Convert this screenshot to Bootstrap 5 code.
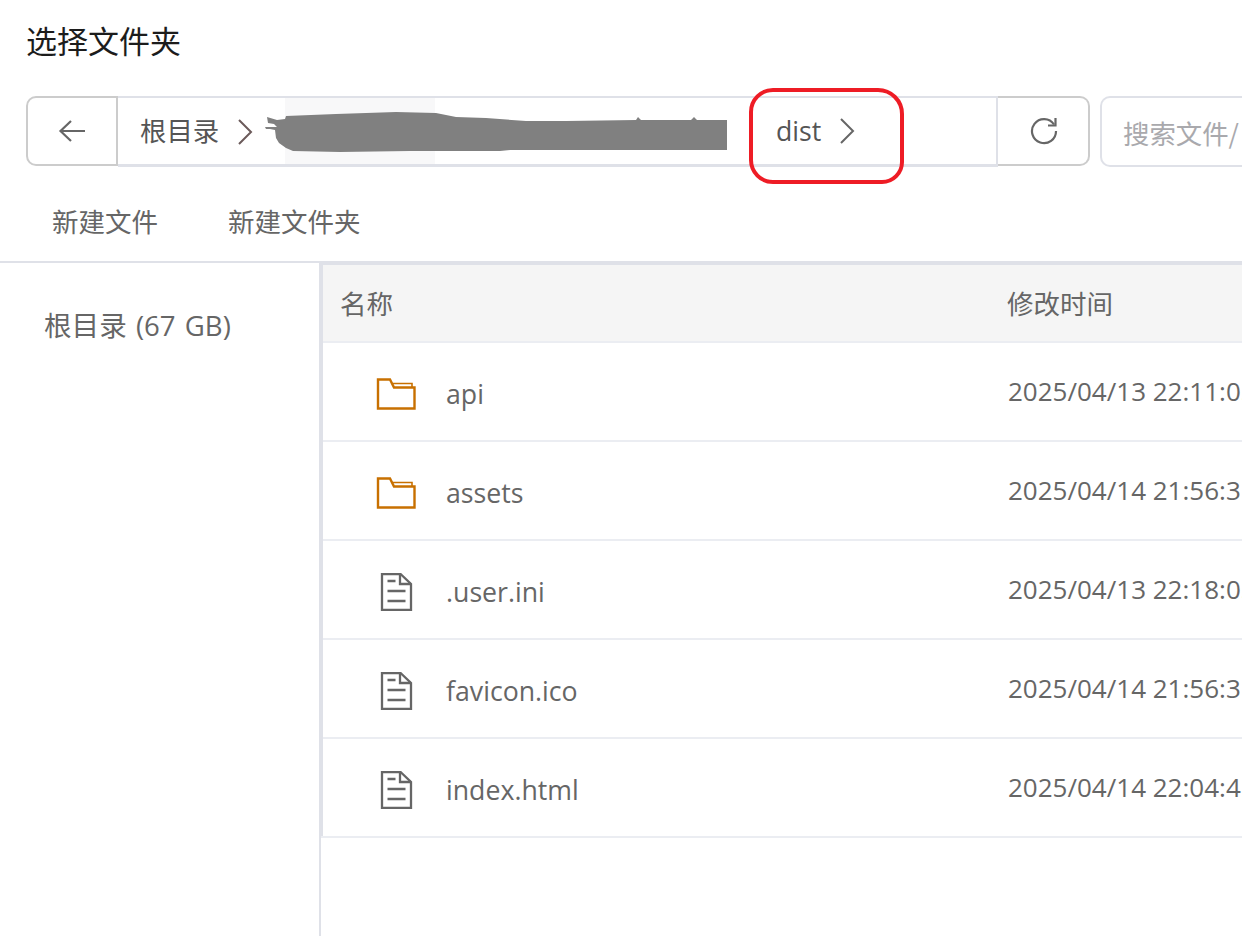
<!DOCTYPE html>
<html lang="zh-CN">
<head>
<meta charset="utf-8">
<title>选择文件夹</title>
<link href="https://cdn.jsdelivr.net/npm/bootstrap@5.3.0/dist/css/bootstrap.min.css" rel="stylesheet">
<style>
html,body{margin:0;height:936px;overflow:hidden;background:#fff}
body{font-family:"Open Sans","Noto Sans CJK SC",sans-serif;color:#666;font-size:26px;line-height:1.2;width:1242px;position:relative}
.dlg-title{height:96px;padding:20px 0 0 26px;font-size:31px;line-height:40px;color:#1c1c1c;font-family:"Noto Sans CJK SC",sans-serif}
.path-row{height:71px;padding-left:26px}
.back-btn,.reload-btn{width:92px;height:70px;border:2px solid #ccc;background:#fff;display:flex;align-items:center;justify-content:center;flex:none}
.back-btn{border-radius:10px 0 0 10px}
.reload-btn{border-radius:0 10px 10px 0;border-left:0;padding-left:2px}
.crumbs{width:880px;height:71px;flex:none;border:solid #dfe1e8;border-width:2px 2px 3px 0;padding-left:22px;position:relative;background:#fff;color:#555;font-size:26.4px}
.crumb-name{white-space:nowrap}
.crumb-dist{position:absolute;left:658px;top:17px;display:flex;align-items:center;gap:18px;line-height:32px;font-size:26.7px}
.crumb-root{gap:18px;position:relative;padding-top:2px}
.fade-box{position:absolute;left:167px;top:0;width:150px;height:66px;background:#f8f8f9}
.search-box{margin-left:10px;flex:1;height:71px;border:2px solid #dfe1e8;border-right:0;border-radius:10px 0 0 10px;padding:19px 0 0 21px;color:#a9a9ad;white-space:nowrap;overflow:hidden;font-family:"Noto Sans CJK SC",sans-serif;font-size:26.4px}
.tool-row{height:96px;padding-left:26px;border-bottom:2px solid #dfe1e8;gap:70px;align-items:center}
.tool-item{padding-left:26px;font-size:26.5px;font-family:"Noto Sans CJK SC",sans-serif;color:#666;line-height:36px;margin-top:14px;white-space:nowrap}
.tool-item + .tool-item{padding-left:0}
.main-area{height:673px}
.side-pane{width:321px;flex:none;padding:44px 0 0 44px;font-size:27.6px;word-spacing:2px;line-height:36px;color:#666;white-space:nowrap;border-right:2px solid #dfe1e8}
.list-pane{flex:1;position:relative;min-width:0}
.list-pane::before{content:"";position:absolute;left:0;top:0;height:573px;width:2px;background:#dfe1e8}
.head-row{height:80px;background:#f5f5f5;border-top:2px solid #dfe1e8;border-bottom:2px solid #ebedf2;align-items:center;padding-top:4px;font-size:26.5px}
.cell-name{width:687px;flex:none;display:flex;align-items:center}
.cell-time{white-space:nowrap;color:#666;font-size:26px}
.head-row .cell-name{padding-left:19px}
.head-row .cell-time{font-size:26.5px;margin-left:-1px}
.file-row{height:99px;border-bottom:2px solid #ebedf2;align-items:center;overflow:hidden}
.file-row .cell-name{padding-left:55px;padding-top:4px;font-size:26.7px}
.file-row .cell-name span{padding-top:2px;margin-left:-1px}
.ico-box{width:40px;height:38px;flex:none;margin-right:31px;display:flex;align-items:center}
.red-mark{position:absolute;left:749px;top:88px;width:155px;height:96px;border:4px solid #ee1c25;border-radius:24px 26px 22px 24px;pointer-events:none}
.smear{position:absolute;left:260px;top:110px;pointer-events:none}
</style>
</head>
<body>
<div class="dlg-title">选择文件夹</div>

<div class="path-row d-flex">
  <div class="back-btn">
    <svg width="28" height="24" viewBox="0 0 28 24" fill="none" stroke="#666" stroke-width="2.2"><path d="M13 2 2.500 12 13 22M2.500 12H27"/></svg>
  </div>
  <div class="crumbs d-flex align-items-center">
    <div class="fade-box"></div>
    <div class="crumb-root d-flex align-items-center">
      <span class="crumb-name">根目录</span>
      <svg width="16" height="26" viewBox="0 0 16 26" fill="none" stroke="#6b5a5a" stroke-width="2"><path d="M2 1l12 12L2 25"/></svg>
    </div>
    <div class="crumb-dist">
      <span class="crumb-name">dist</span>
      <svg width="16" height="26" viewBox="0 0 16 26" fill="none" stroke="#666" stroke-width="2"><path d="M2 1l12 12L2 25"/></svg>
    </div>
  </div>
  <div class="reload-btn">
    <svg width="28" height="28" viewBox="0 0 28 28" fill="none" stroke="#666" stroke-width="2.2"><path d="M24 7.500A12 12 0 1 0 26 14"/><path d="M25.500 1v7.500H18"/></svg>
  </div>
  <div class="search-box">搜索文件/目录</div>
</div>

<div class="tool-row d-flex">
  <div class="tool-item">新建文件</div>
  <div class="tool-item">新建文件夹</div>
</div>

<div class="main-area d-flex">
  <div class="side-pane">根目录 (67 GB)</div>
  <div class="list-pane">
    <div class="head-row d-flex">
      <div class="cell-name">名称</div>
      <div class="cell-time">修改时间</div>
    </div>
    <div class="file-row d-flex">
      <div class="cell-name">
        <div class="ico-box"><svg width="40" height="32" viewBox="0 0 40 32" fill="none" stroke="#c87000" stroke-width="2.400"><path d="M2 1.500h12l4 8h20.500v21H2z"/><path stroke-width="1.600" d="M16.500 5.500h19.500v4"/></svg></div>
        <span>api</span>
      </div>
      <div class="cell-time">2025/04/13 22:11:05</div>
    </div>
    <div class="file-row d-flex">
      <div class="cell-name">
        <div class="ico-box"><svg width="40" height="32" viewBox="0 0 40 32" fill="none" stroke="#c87000" stroke-width="2.400"><path d="M2 1.500h12l4 8h20.500v21H2z"/><path stroke-width="1.600" d="M16.500 5.500h19.500v4"/></svg></div>
        <span>assets</span>
      </div>
      <div class="cell-time">2025/04/14 21:56:31</div>
    </div>
    <div class="file-row d-flex">
      <div class="cell-name">
        <div class="ico-box"><svg width="40" height="38" viewBox="0 0 40 38" fill="none" stroke="#666" stroke-width="2.300"><path d="M6 1h18.500L35 11v26H6z"/><path d="M24 1v10h11M11.500 8h8M11.500 18h18M11.500 28h18"/></svg></div>
        <span>.user.ini</span>
      </div>
      <div class="cell-time">2025/04/13 22:18:05</div>
    </div>
    <div class="file-row d-flex">
      <div class="cell-name">
        <div class="ico-box"><svg width="40" height="38" viewBox="0 0 40 38" fill="none" stroke="#666" stroke-width="2.300"><path d="M6 1h18.500L35 11v26H6z"/><path d="M24 1v10h11M11.500 8h8M11.500 18h18M11.500 28h18"/></svg></div>
        <span>favicon.ico</span>
      </div>
      <div class="cell-time">2025/04/14 21:56:31</div>
    </div>
    <div class="file-row d-flex">
      <div class="cell-name">
        <div class="ico-box"><svg width="40" height="38" viewBox="0 0 40 38" fill="none" stroke="#666" stroke-width="2.300"><path d="M6 1h18.500L35 11v26H6z"/><path d="M24 1v10h11M11.500 8h8M11.500 18h18M11.500 28h18"/></svg></div>
        <span>index.html</span>
      </div>
      <div class="cell-time">2025/04/14 22:04:41</div>
    </div>
  </div>
</div>

<svg class="smear" width="470" height="44" viewBox="260 110 470 44"><path fill="#808080" d="M267 117l10 3 8-1 1-3 50-2 60-2 40 1 20 4 30 1 40 3 40 0 70-1 2-3 3 3 50 0 3-3 3 3 30-0V150H560l-50 0-10 1-90 0-70 1-47-1-7-3-7-5-3-5-1-8-5-1h-4l-1-2h12l-3-3-6-1z"/></svg>
<div class="red-mark"></div>
</body>
</html>
